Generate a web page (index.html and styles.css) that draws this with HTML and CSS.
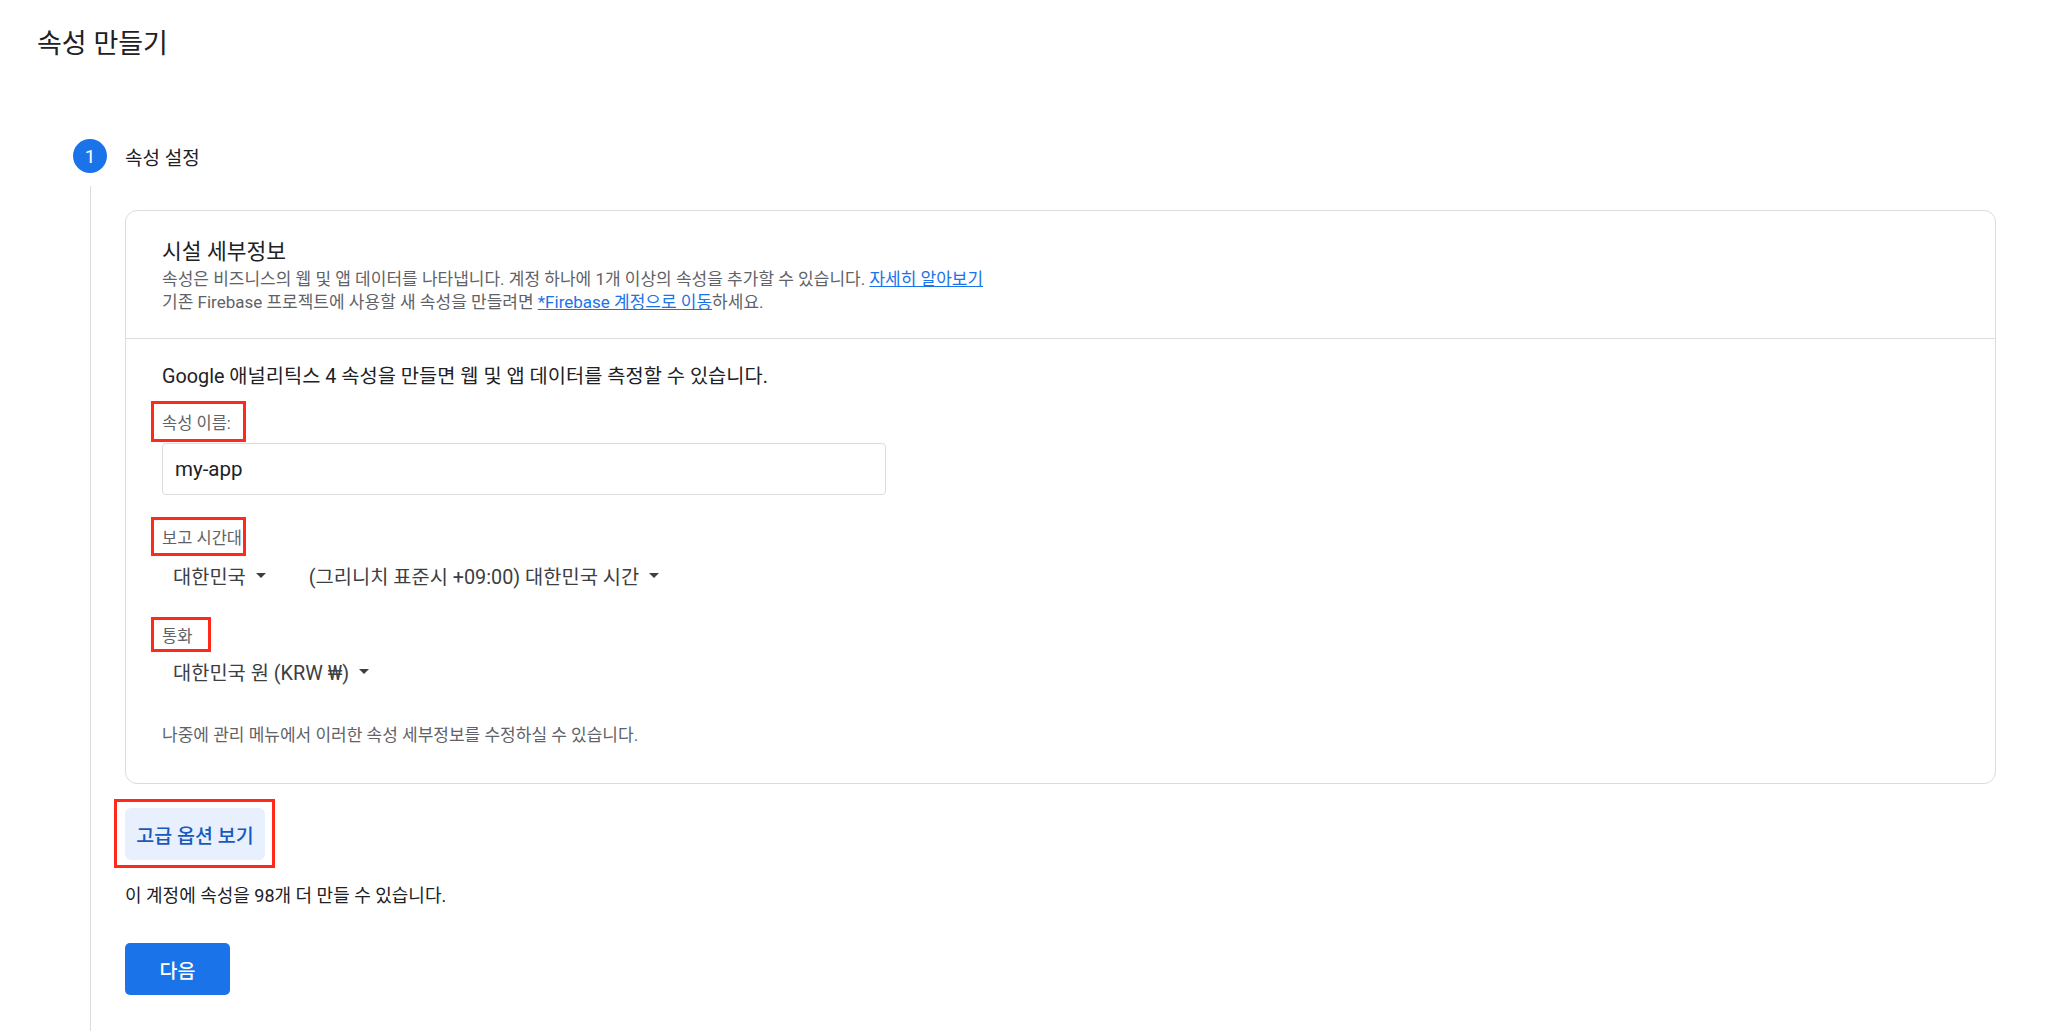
FILE: index.html
```html
<!DOCTYPE html>
<html lang="ko">
<head>
    <meta charset="UTF-8">
    <meta name="viewport" content="width=device-width, initial-scale=1.0">
    <title>속성 만들기</title>
    <link rel="stylesheet" href="styles.css">
</head>
<body>
    <div class="page">
        <h1 class="page-title">속성 만들기</h1>

        <div class="stepper">
            <div class="step-num">1</div>
            <div class="step-title">속성 설정</div>
            <div class="step-line"></div>

            <div class="step-body">
                <div class="card">
                    <div class="card-head">
                        <h2>시설 세부정보</h2>
                        <p class="desc">속성은 비즈니스의 웹 및 앱 데이터를 나타냅니다. 계정 하나에 1개 이상의 속성을 추가할 수 있습니다. <a href="#">자세히 알아보기</a></p>
                        <p class="desc">기존 Firebase 프로젝트에 사용할 새 속성을 만들려면 <a href="#">*Firebase 계정으로 이동</a>하세요.</p>
                    </div>

                    <div class="card-body">
                        <p class="intro">Google 애널리틱스 4 속성을 만들면 웹 및 앱 데이터를 측정할 수 있습니다.</p>

                        <div class="field">
                            <label class="mark mark-name" for="propName">속성 이름:</label>
                        </div>
                        <input class="text-input" type="text" id="propName" value="my-app">

                        <div class="field field-gap">
                            <span class="mark mark-tz">보고 시간대</span>
                        </div>
                        <div class="select-row">
                            <button type="button" class="select">대한민국 <span class="caret"></span></button>
                            <button type="button" class="select">(그리니치 표준시 +09:00) 대한민국 시간 <span class="caret"></span></button>
                        </div>

                        <div class="field field-gap">
                            <span class="mark mark-cur">통화</span>
                        </div>
                        <div class="select-row">
                            <button type="button" class="select">대한민국 원 (KRW ₩) <span class="caret"></span></button>
                        </div>

                        <p class="note">나중에 관리 메뉴에서 이러한 속성 세부정보를 수정하실 수 있습니다.</p>
                    </div>
                </div>

                <div class="advanced">
                    <div class="mark mark-btn">
                        <button type="button" class="btn-secondary">고급 옵션 보기</button>
                    </div>
                </div>

                <p class="count">이 계정에 속성을 98개 더 만들 수 있습니다.</p>

                <button type="button" class="btn-primary">다음</button>
            </div>
        </div>
    </div>
</body>
</html>
```

FILE: styles.css
```css
body {
    margin: 0;
    background-color: #fff;
    color: #202124;
    font-family: Roboto, "Noto Sans CJK KR", sans-serif;
}

.page {
    padding: 27px 52px 0 37px;
}

.page-title {
    margin: 0;
    font-size: 27px;
    line-height: 34px;
    font-weight: 400;
    color: #202124;
}

/* stepper: number + title on top, rail line + content below */
.stepper {
    display: grid;
    grid-template-columns: 34px 1fr;
    column-gap: 18px;
    margin: 78px 0 0 36px;
}

.step-num {
    width: 34px;
    height: 34px;
    border-radius: 50%;
    background-color: #1a73e8;
    color: #fff;
    font-size: 19px;
    display: flex;
    align-items: center;
    justify-content: center;
}

.step-title {
    align-self: center;
    font-size: 19px;
    color: #202124;
}

.step-line {
    justify-self: center;
    width: 1px;
    margin-top: 13px;
    background-color: #dadce0;
}

.step-body {
    padding: 37px 0 37px;
}

.card {
    border: 1px solid #dadce0;
    border-radius: 12px;
}

.card-head {
    padding: 26px 36px 24px;
    border-bottom: 1px solid #dadce0;
}

.card-head h2 {
    margin: 0 0 2px;
    font-size: 21.5px;
    line-height: 29px;
    font-weight: 400;
    color: #202124;
}

.desc {
    margin: 0;
    font-size: 17px;
    line-height: 23px;
    color: #5f6368;
}

.desc a {
    color: #1a73e8;
}

.card-body {
    padding: 26px 36px 37px;
}

.intro {
    margin: 0 0 12px;
    font-size: 19.8px;
    line-height: 24px;
    color: #202124;
}

/* red annotation boxes */
.mark {
    display: inline-flex;
    align-items: center;
    box-sizing: border-box;
    border: 3px solid #ff2a1a;
    margin-left: -11px;
    padding-left: 8px;
    font-size: 16.5px;
    color: #5f6368;
}

.mark-name {
    width: 95px;
    height: 41px;
}

.mark-tz {
    width: 95px;
    height: 39px;
}

.mark-cur {
    width: 60px;
    height: 35px;
}

.field-gap {
    margin-top: 22px;
}

.text-input {
    display: block;
    box-sizing: border-box;
    width: 724px;
    height: 52px;
    margin-top: 1px;
    padding: 0 12px;
    border: 1px solid #dadce0;
    border-radius: 4px;
    font-family: Roboto, "Noto Sans CJK KR", sans-serif;
    font-size: 20.5px;
    color: #202124;
}

.select-row {
    display: flex;
    gap: 21px;
    height: 38px;
}

.select-row + .field-gap {
    margin-top: 23px;
}

.select {
    display: inline-flex;
    align-items: center;
    gap: 10px;
    padding: 0 11px;
    border: none;
    background: none;
    font-family: Roboto, "Noto Sans CJK KR", sans-serif;
    font-size: 19.8px;
    color: #3c4043;
    cursor: pointer;
}

.caret {
    width: 0;
    height: 0;
    border-left: 5px solid transparent;
    border-right: 5px solid transparent;
    border-top: 5px solid #3c4043;
}

.note {
    margin: 34px 0 0;
    font-size: 17px;
    line-height: 22px;
    color: #5f6368;
}

.advanced {
    margin-top: 15px;
}

.mark-btn {
    display: inline-block;
    padding: 6px 7px 5px 8px;
}

.btn-secondary {
    display: block;
    width: 140px;
    height: 52px;
    border: none;
    border-radius: 6px;
    background-color: #e8f0fe;
    color: #185abc;
    font-family: Roboto, "Noto Sans CJK KR", sans-serif;
    font-size: 19.5px;
    font-weight: 500;
    cursor: pointer;
}

.count {
    margin: 16px 0 0;
    font-size: 18px;
    line-height: 24px;
    color: #202124;
}

.btn-primary {
    margin-top: 35px;
    width: 105px;
    height: 52px;
    border: none;
    border-radius: 5px;
    background-color: #1a73e8;
    color: #fff;
    font-family: Roboto, "Noto Sans CJK KR", sans-serif;
    font-size: 19.5px;
    font-weight: 500;
    cursor: pointer;
}

.btn-primary:hover {
    background-color: #1b66c9;
}
```
